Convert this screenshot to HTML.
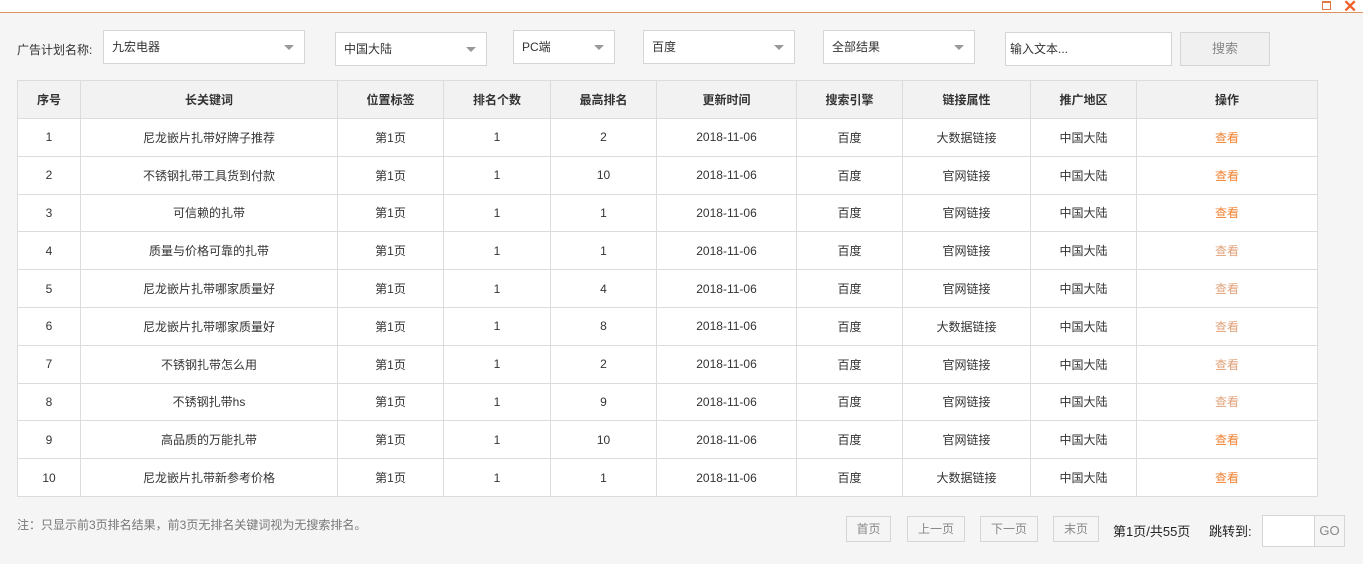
<!DOCTYPE html>
<html><head><meta charset="utf-8"><style>
*{box-sizing:border-box;margin:0;padding:0}
body{width:1363px;height:564px;background:#f5f5f5;font-family:"Liberation Sans","Noto Sans CJK SC",sans-serif;font-size:12px;color:#333;position:relative;overflow:hidden}
.top{position:absolute;left:0;top:0;width:1363px;height:13px;background:#fff;border-bottom:1px solid #e0935f}
.abs{position:absolute}
.sel{position:absolute;background:#fff;border:1px solid #d5d5d5;height:34px;line-height:32px;padding-left:8px;color:#333}
.sel:after{content:"";position:absolute;right:10px;top:14px;border-left:5px solid transparent;border-right:5px solid transparent;border-top:5px solid #999}
table{position:absolute;left:17px;top:80px;border-collapse:collapse;background:#fff;width:1301px}
td,th{border:1px solid #dcdcdc;text-align:center;height:37.8px;font-size:12px;padding:0}
th{background:#f2f2f2;font-weight:bold;color:#333;height:38px}
.o{color:#f08232}.o2{color:#e0a27a}
.btn{position:absolute;border:1px solid #d5d5d5;background:#f5f5f5;color:#888;text-align:center;height:26px;line-height:24px;top:516px}
</style></head><body>
<div class="top"></div>
<div class="abs" style="left:1322px;top:1px;width:9px;height:9px;border:1px solid #e07a40;border-top-width:2px"></div>
<div class="abs" style="left:1343px;top:-3px;color:#f0602a;font-size:17px;font-weight:bold">✕</div>
<div class="abs" style="left:17px;top:41px">广告计划名称:</div>
<div class="sel" style="left:103px;top:30px;width:202px">九宏电器</div>
<div class="sel" style="left:335px;top:32px;width:152px">中国大陆</div>
<div class="sel" style="left:513px;top:30px;width:102px">PC端</div>
<div class="sel" style="left:643px;top:30px;width:152px">百度</div>
<div class="sel" style="left:823px;top:30px;width:152px">全部结果</div>
<div class="abs" style="left:1005px;top:32px;width:167px;height:34px;background:#fff;border:1px solid #d5d5d5;line-height:32px;padding-left:4px">输入文本...</div>
<div class="abs" style="left:1180px;top:32px;width:90px;height:34px;background:#f0f0f0;border:1px solid #d5d5d5;line-height:32px;text-align:center;color:#888;font-size:13px">搜索</div>
<table>
<tr><th style="width:63px">序号</th><th style="width:257px">长关键词</th><th style="width:106px">位置标签</th><th style="width:107px">排名个数</th><th style="width:106px">最高排名</th><th style="width:140px">更新时间</th><th style="width:106px">搜索引擎</th><th style="width:128px">链接属性</th><th style="width:106px">推广地区</th><th>操作</th></tr>
<tr><td>1</td><td>尼龙嵌片扎带好牌子推荐</td><td>第1页</td><td>1</td><td>2</td><td>2018-11-06</td><td>百度</td><td>大数据链接</td><td>中国大陆</td><td class="o">查看</td></tr>
<tr><td>2</td><td>不锈钢扎带工具货到付款</td><td>第1页</td><td>1</td><td>10</td><td>2018-11-06</td><td>百度</td><td>官网链接</td><td>中国大陆</td><td class="o">查看</td></tr>
<tr><td>3</td><td>可信赖的扎带</td><td>第1页</td><td>1</td><td>1</td><td>2018-11-06</td><td>百度</td><td>官网链接</td><td>中国大陆</td><td class="o">查看</td></tr>
<tr><td>4</td><td>质量与价格可靠的扎带</td><td>第1页</td><td>1</td><td>1</td><td>2018-11-06</td><td>百度</td><td>官网链接</td><td>中国大陆</td><td class="o2">查看</td></tr>
<tr><td>5</td><td>尼龙嵌片扎带哪家质量好</td><td>第1页</td><td>1</td><td>4</td><td>2018-11-06</td><td>百度</td><td>官网链接</td><td>中国大陆</td><td class="o2">查看</td></tr>
<tr><td>6</td><td>尼龙嵌片扎带哪家质量好</td><td>第1页</td><td>1</td><td>8</td><td>2018-11-06</td><td>百度</td><td>大数据链接</td><td>中国大陆</td><td class="o2">查看</td></tr>
<tr><td>7</td><td>不锈钢扎带怎么用</td><td>第1页</td><td>1</td><td>2</td><td>2018-11-06</td><td>百度</td><td>官网链接</td><td>中国大陆</td><td class="o2">查看</td></tr>
<tr><td>8</td><td>不锈钢扎带hs</td><td>第1页</td><td>1</td><td>9</td><td>2018-11-06</td><td>百度</td><td>官网链接</td><td>中国大陆</td><td class="o2">查看</td></tr>
<tr><td>9</td><td>高品质的万能扎带</td><td>第1页</td><td>1</td><td>10</td><td>2018-11-06</td><td>百度</td><td>官网链接</td><td>中国大陆</td><td class="o">查看</td></tr>
<tr><td>10</td><td>尼龙嵌片扎带新参考价格</td><td>第1页</td><td>1</td><td>1</td><td>2018-11-06</td><td>百度</td><td>大数据链接</td><td>中国大陆</td><td class="o">查看</td></tr>
</table>
<div class="abs" style="left:17px;top:516px;color:#777">注：只显示前3页排名结果，前3页无排名关键词视为无搜索排名。</div>
<div class="btn" style="left:846px;width:45px">首页</div>
<div class="btn" style="left:907px;width:58px">上一页</div>
<div class="btn" style="left:980px;width:58px">下一页</div>
<div class="btn" style="left:1053px;width:46px">末页</div>
<div class="abs" style="left:1113px;top:521px;font-size:13px;color:#222">第1页/共55页</div>
<div class="abs" style="left:1209px;top:521px;font-size:13px;color:#222">跳转到:</div>
<div class="abs" style="left:1262px;top:515px;width:53px;height:32px;background:#fff;border:1px solid #d5d5d5"></div>
<div class="abs" style="left:1314px;top:515px;width:31px;height:32px;background:#f5f5f5;border:1px solid #d5d5d5;line-height:30px;text-align:center;color:#888;font-size:13px">GO</div>
</body></html>
